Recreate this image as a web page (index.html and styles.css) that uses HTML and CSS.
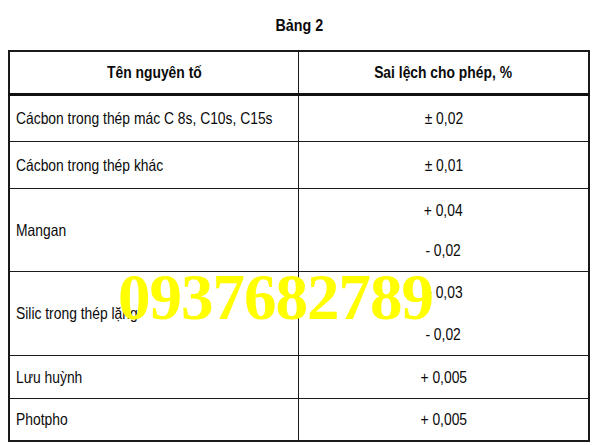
FILE: index.html
```html
<!DOCTYPE html>
<html lang="vi">
<head>
<meta charset="utf-8">
<link rel="stylesheet" href="styles.css">
</head>
<body>
<div class="page">
  <div class="title"><span class="nar">Bảng 2</span></div>
  <table class="grid">
    <tr class="r-head">
      <th class="c-name"><span class="nar">Tên nguyên tố</span></th>
      <th class="c-val"><span class="nar">Sai lệch cho phép, %</span></th>
    </tr>
    <tr class="r-1">
      <td class="c-name"><span class="nar nar-l">Cácbon trong thép mác C 8s, C10s, C15s</span></td>
      <td class="c-val"><span class="nar">± 0,02</span></td>
    </tr>
    <tr class="r-2">
      <td class="c-name"><span class="nar nar-l">Cácbon trong thép khác</span></td>
      <td class="c-val"><span class="nar">± 0,01</span></td>
    </tr>
    <tr class="r-3">
      <td class="c-name"><span class="nar nar-l">Mangan</span></td>
      <td class="c-val"><div class="pair"><span class="nar">+ 0,04</span><span class="nar">- 0,02</span></div></td>
    </tr>
    <tr class="r-4">
      <td class="c-name"><span class="nar nar-l">Silic trong thép lặng</span></td>
      <td class="c-val"><div class="pair pair-wide"><span class="nar">+ 0,03</span><span class="nar">- 0,02</span></div></td>
    </tr>
    <tr class="r-5">
      <td class="c-name"><span class="nar nar-l">Lưu huỳnh</span></td>
      <td class="c-val"><span class="nar">+ 0,005</span></td>
    </tr>
    <tr class="r-6">
      <td class="c-name"><span class="nar nar-l">Photpho</span></td>
      <td class="c-val"><span class="nar">+ 0,005</span></td>
    </tr>
  </table>
  <div class="mark">0937682789</div>
</div>
</body>
</html>
```

FILE: styles.css
```css
html, body {
  margin: 0;
  padding: 0;
  background: #ffffff;
}

.page {
  position: relative;
  width: 594px;
  height: 445px;
  overflow: hidden;
  font-family: "Liberation Sans", Arial, sans-serif;
  color: #0a0a0a;
}

.nar {
  display: inline-block;
  transform: scaleX(0.84);
  transform-origin: center;
  white-space: nowrap;
}

.nar-l {
  transform-origin: left center;
}

.title {
  height: 50px;
  box-sizing: border-box;
  padding-top: 16px;
  padding-left: 4px;
  text-align: center;
  font-weight: bold;
  font-size: 17px;
  line-height: 20px;
}

.grid {
  margin-left: 8px;
  width: 582px;
  border-collapse: collapse;
  table-layout: fixed;
  border: 2px solid #1a1a1a;
  font-size: 16.5px;
}

.grid th, .grid td {
  border: 1.5px solid #1a1a1a;
  padding: 0 6px;
  vertical-align: middle;
  line-height: 20px;
  white-space: nowrap;
  overflow: visible;
}

.grid th {
  font-weight: bold;
  text-align: center;
}

.c-name {
  width: 276px;
  text-align: left;
}

.grid th.c-name {
  text-align: center;
}

.c-val {
  text-align: center;
}

.r-head { height: 43px; }
.r-head th { border-bottom: 3px solid #111; }
.r-1 { height: 47px; }
.r-2 { height: 47px; }
.r-3 { height: 83px; }
.r-4 { height: 84px; }
.r-5 { height: 43px; }
.r-6 { height: 43px; }

.pair {
  display: flex;
  flex-direction: column;
  align-items: center;
  gap: 20px;
}

.pair-wide {
  gap: 22px;
}

.mark {
  position: absolute;
  left: 118px;
  top: 265px;
  font-family: "Liberation Serif", "Times New Roman", serif;
  font-weight: bold;
  font-size: 65px;
  line-height: 1;
  letter-spacing: -1px;
  color: #ffff00;
  white-space: nowrap;
}
```
